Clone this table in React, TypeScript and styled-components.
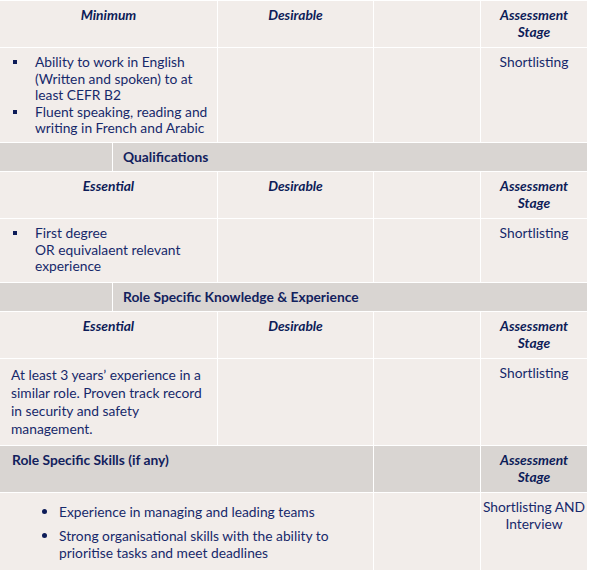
import React from "react";
import styled, { createGlobalStyle } from "styled-components";

const Global = createGlobalStyle`
  html, body { margin: 0; padding: 0; background: #ffffff; }
  body { font-family: Lato, "Open Sans", sans-serif; }
`;

const Table = styled.div`
  width: 587px;
  display: flex;
  flex-direction: column;
  gap: 1px;
  padding-top: 1px;
  background: #ffffff;
  font-family: Lato, "Open Sans", sans-serif;
  font-size: 13.8px;
  color: #17296a;
`;

const Row = styled.div<{ $cols: string; $h: number }>`
  display: grid;
  grid-template-columns: ${(p) => p.$cols};
  gap: 1px;
  height: ${(p) => p.$h}px;
`;

const Cell = styled.div<{ $grey?: boolean; $align?: string; $pad?: string; $center?: boolean }>`
  background: ${(p) => (p.$grey ? "#d9d5d2" : "#f2edea")};
  text-align: ${(p) => p.$align || "left"};
  padding: ${(p) => p.$pad || "0"};
  line-height: 17px;
  display: ${(p) => (p.$center ? "flex" : "block")};
  align-items: center;
  box-sizing: border-box;
`;

const Head = styled.div`
  font-weight: 700;
  font-style: italic;
  color: #0d1c58;
  line-height: 17px;
`;

const SectionTitle = styled.div`
  font-weight: 700;
  color: #12215d;
`;

const SquareList = styled.ul`
  list-style: none;
  margin: 0;
  padding: 0;
`;

const SquareItem = styled.li`
  position: relative;
  padding-left: 23px;
  line-height: 16.5px;
  &::before {
    content: "";
    position: absolute;
    left: 1px;
    top: 6px;
    width: 4px;
    height: 4px;
    background: #0d1c58;
  }
`;

const DotList = styled.ul`
  list-style: none;
  margin: 0;
  padding: 0;
  display: flex;
  flex-direction: column;
  gap: 7px;
`;

const DotItem = styled.li`
  position: relative;
  padding-left: 47px;
  line-height: 17px;
  &::before {
    content: "";
    position: absolute;
    left: 30px;
    top: 6px;
    width: 5px;
    height: 5px;
    border-radius: 50%;
    background: #0d1c58;
  }
`;

const Para = styled.p`
  margin: 0;
  line-height: 18px;
`;

const STD = "217px 155px 106px 106px";
const SEC = "112px 474px";
const SKL = "373px 106px 106px";

function HeaderRow({ first }: { first: string }) {
  return (
    <Row $cols={STD} $h={46}>
      <Cell $align="center" $pad="5px 0 0">
        <Head>{first}</Head>
      </Cell>
      <Cell $align="center" $pad="5px 0 0">
        <Head>Desirable</Head>
      </Cell>
      <Cell />
      <Cell $align="center" $pad="5px 0 0">
        <Head>
          Assessment
          <br />
          Stage
        </Head>
      </Cell>
    </Row>
  );
}

function SectionRow({ title }: { title: string }) {
  return (
    <Row $cols={SEC} $h={28}>
      <Cell $grey />
      <Cell $grey $center $pad="0 0 1px 10px">
        <SectionTitle>{title}</SectionTitle>
      </Cell>
    </Row>
  );
}

export default function App() {
  return (
    <>
      <Global />
      <Table>
        <HeaderRow first="Minimum" />
        <Row $cols={STD} $h={94}>
          <Cell $pad="6px 8px 0 12px">
            <SquareList>
              <SquareItem>Ability to work in English (Written and spoken) to at least CEFR B2</SquareItem>
              <SquareItem>Fluent speaking, reading and writing in French and Arabic</SquareItem>
            </SquareList>
          </Cell>
          <Cell />
          <Cell />
          <Cell $align="center" $pad="5px 0 0">
            Shortlisting
          </Cell>
        </Row>
        <SectionRow title="Qualifications" />
        <HeaderRow first="Essential" />
        <Row $cols={STD} $h={63}>
          <Cell $pad="6px 8px 0 12px">
            <SquareList>
              <SquareItem>
                First degree
                <br />
                OR equivalaent relevant experience
              </SquareItem>
            </SquareList>
          </Cell>
          <Cell />
          <Cell />
          <Cell $align="center" $pad="5px 0 0">
            Shortlisting
          </Cell>
        </Row>
        <SectionRow title="Role Specific Knowledge & Experience" />
        <HeaderRow first="Essential" />
        <Row $cols={STD} $h={86}>
          <Cell $pad="7px 8px 0 11px">
            <Para>At least 3 years’ experience in a similar role. Proven track record in security and safety management.</Para>
          </Cell>
          <Cell />
          <Cell />
          <Cell $align="center" $pad="5px 0 0">
            Shortlisting
          </Cell>
        </Row>
        <Row $cols={SKL} $h={46}>
          <Cell $grey $pad="5px 0 0 12px">
            <SectionTitle>Role Specific Skills (if any)</SectionTitle>
          </Cell>
          <Cell $grey />
          <Cell $grey $align="center" $pad="5px 0 0">
            <Head>
              Assessment
              <br />
              Stage
            </Head>
          </Cell>
        </Row>
        <Row $cols={SKL} $h={90}>
          <Cell $pad="10px 8px 0 12px">
            <DotList>
              <DotItem>Experience in managing and leading teams</DotItem>
              <DotItem>Strong organisational skills with the ability to prioritise tasks and meet deadlines</DotItem>
            </DotList>
          </Cell>
          <Cell />
          <Cell $align="center" $pad="5px 0 0">
            Shortlisting AND Interview
          </Cell>
        </Row>
      </Table>
    </>
  );
}
